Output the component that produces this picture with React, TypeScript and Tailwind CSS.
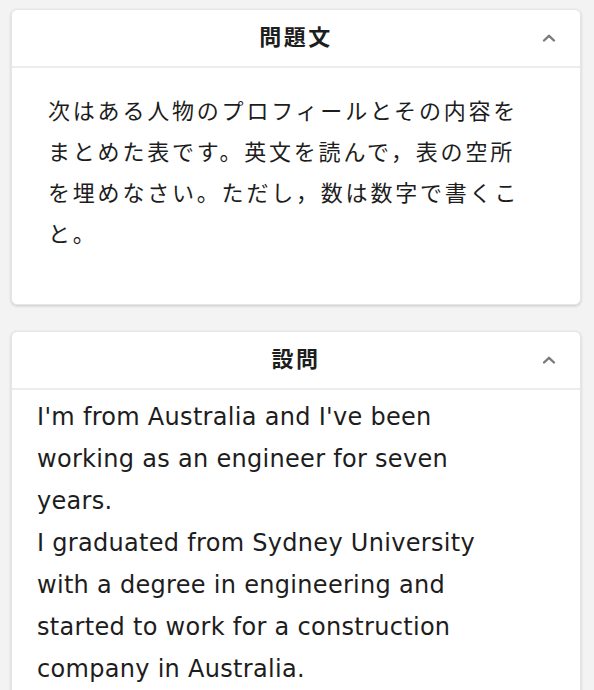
import React from "react";

function Chevron() {
  return (
    <svg width="14" height="10" viewBox="0 0 14 10" className="absolute right-[24px] top-1/2 -translate-y-1/2">
      <polyline points="2,7.5 7,2.8 12,7.5" fill="none" stroke="#7a7a7a" strokeWidth="2.4" strokeLinecap="round" strokeLinejoin="round" />
    </svg>
  );
}

function Header({ title, h }: { title: string; h: string }) {
  return (
    <div className={`relative flex items-center justify-center border-b-2 border-[#ececec] ${h}`}>
      <span className="text-[22px] font-bold text-[#1d1d1d] tracking-[2.5px] pb-[5px]" style={{ fontFamily: '"Noto Sans CJK JP", sans-serif' }}>
        {title}
      </span>
      <Chevron />
    </div>
  );
}

export default function App() {
  return (
    <div className="bg-[#f3f3f3] pt-[9px] pl-[11px] pr-[13px] overflow-hidden h-[690px]" style={{ fontFamily: '"Noto Sans CJK JP", sans-serif' }}>
      <div className="flex flex-col gap-[26px]">
        <section className="bg-white rounded-[6px] border border-[#e6e6e6] shadow-[0_1px_3px_rgba(0,0,0,0.18)]">
          <Header title="問題文" h="h-[58px]" />
          <div className="pl-[36px] pt-[21px] pb-[51px]">
            <p className="w-[486px] text-[22px] leading-[41px] tracking-[2.8px] text-[#1d1d1d]">
              次はある人物のプロフィールとその内容をまとめた表です。英文を読んで，表の空所を埋めなさい。ただし，数は数字で書くこと。
            </p>
          </div>
        </section>
        <section className="bg-white rounded-[6px] border border-[#e6e6e6] shadow-[0_1px_3px_rgba(0,0,0,0.18)]">
          <Header title="設問" h="h-[58px]" />
          <div className="pl-[25px] pt-[6px] pb-[40px]">
            <p className="text-[24px] leading-[42px] tracking-[0.3px] text-[#1d1d1d] whitespace-nowrap" style={{ fontFamily: '"DejaVu Sans", "Noto Sans CJK JP", sans-serif' }}>
              I'm from Australia and I've been
              <br />
              working as an engineer for seven
              <br />
              years.
              <br />
              I graduated from Sydney University
              <br />
              with a degree in engineering and
              <br />
              started to work for a construction
              <br />
              company in Australia.
            </p>
          </div>
        </section>
      </div>
    </div>
  );
}
